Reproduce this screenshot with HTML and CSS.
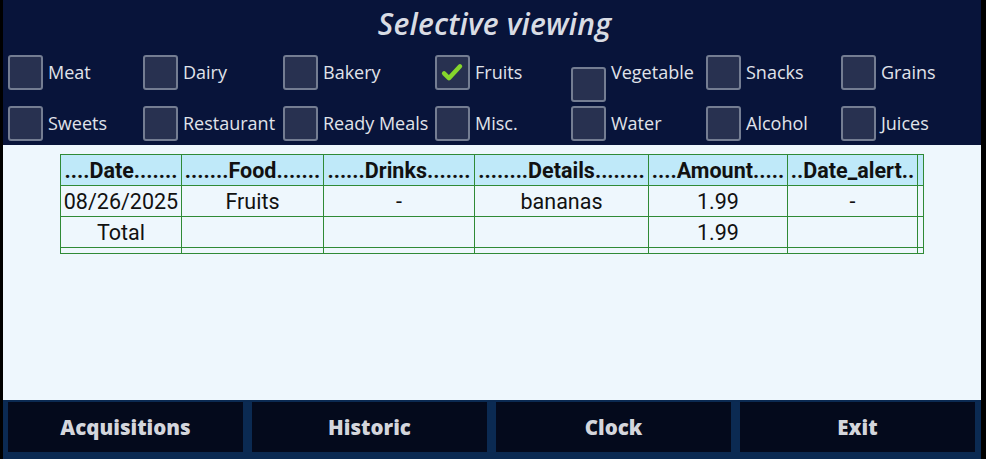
FILE: index.html
```html
<!DOCTYPE html>
<html>
<head>
<meta charset="utf-8">
<link rel="stylesheet" href="styles.css">
</head>
<body>
<div class="app">
  <header class="top">
    <h1 class="title">Selective viewing</h1>
    <div class="filters">
      <label class="opt"><span class="box"></span><span class="lbl">Meat</span></label>
      <label class="opt"><span class="box"></span><span class="lbl">Dairy</span></label>
      <label class="opt"><span class="box"></span><span class="lbl">Bakery</span></label>
      <label class="opt"><span class="box checked"><svg viewBox="0 0 35 35" width="31" height="31"><path d="M8 18.5 L13.5 24 L26 10.5" fill="none" stroke="#86d62c" stroke-width="5" stroke-linecap="round" stroke-linejoin="round"/></svg></span><span class="lbl">Fruits</span></label>
      <label class="opt"><span class="box low"></span><span class="lbl">Vegetable</span></label>
      <label class="opt"><span class="box"></span><span class="lbl">Snacks</span></label>
      <label class="opt"><span class="box"></span><span class="lbl">Grains</span></label>
      <label class="opt"><span class="box"></span><span class="lbl">Sweets</span></label>
      <label class="opt"><span class="box"></span><span class="lbl">Restaurant</span></label>
      <label class="opt"><span class="box"></span><span class="lbl">Ready Meals</span></label>
      <label class="opt"><span class="box"></span><span class="lbl">Misc.</span></label>
      <label class="opt"><span class="box"></span><span class="lbl">Water</span></label>
      <label class="opt"><span class="box"></span><span class="lbl">Alcohol</span></label>
      <label class="opt"><span class="box"></span><span class="lbl">Juices</span></label>
    </div>
  </header>
  <main class="content">
    <table class="grid">
      <colgroup>
        <col class="c1"><col class="c2"><col class="c3"><col class="c4"><col class="c5"><col class="c6"><col class="c7">
      </colgroup>
      <thead>
        <tr>
          <th>....Date.......</th>
          <th>.......Food.......</th>
          <th>......Drinks.......</th>
          <th>........Details........</th>
          <th>....Amount.....</th>
          <th>..Date_alert..</th>
          <th></th>
        </tr>
      </thead>
      <tbody>
        <tr>
          <td>08/26/2025</td>
          <td>Fruits</td>
          <td>-</td>
          <td>bananas</td>
          <td>1.99</td>
          <td>-</td>
          <td></td>
        </tr>
        <tr>
          <td>Total</td>
          <td></td>
          <td></td>
          <td></td>
          <td>1.99</td>
          <td></td>
          <td></td>
        </tr>
        <tr class="thin">
          <td></td><td></td><td></td><td></td><td></td><td></td><td></td>
        </tr>
      </tbody>
    </table>
  </main>
  <nav class="bottom">
    <button class="btn">Acquisitions</button>
    <button class="btn">Historic</button>
    <button class="btn">Clock</button>
    <button class="btn">Exit</button>
  </nav>
</div>
</body>
</html>
```
FILE: styles.css
```css
html, body {
  margin: 0;
  padding: 0;
  background: #000;
  height: 459px;
  overflow: hidden;
}
.app {
  margin-left: 3px;
  width: 978px;
  height: 459px;
  display: flex;
  flex-direction: column;
  font-family: "Open Sans", "DejaVu Sans", sans-serif;
}
.top {
  height: 145px;
  background: #08143a;
  box-sizing: border-box;
  padding-left: 5px;
}
.title {
  margin: 0;
  height: 52px;
  line-height: 48px;
  text-align: center;
  font-size: 30px;
  font-weight: 600;
  font-style: italic;
  color: #d9dce4;
  letter-spacing: 0.2px;
}
.filters {
  display: grid;
  grid-template-columns: 135px 140px 152px 136px 135px 135px 1fr;
  grid-template-rows: 51px 42px;
}
.opt {
  display: flex;
  align-items: flex-start;
  color: #e0e3ea;
  font-size: 18px;
}
.box {
  flex: none;
  width: 35px;
  height: 35px;
  margin-top: 3px;
  box-sizing: border-box;
  border: 2px solid #747d92;
  border-radius: 3px;
  background: #283150;
  display: flex;
  align-items: center;
  justify-content: center;
}
.box.low {
  margin-top: 15px;
}
.lbl {
  margin-left: 5px;
  margin-top: 3px;
  line-height: 35px;
  white-space: nowrap;
}
.content {
  height: 255px;
  background: #eef7fd;
  box-sizing: border-box;
  padding: 9px 0 0 57px;
}
.grid {
  border-collapse: collapse;
  table-layout: fixed;
  width: 863px;
  font-family: Roboto, "Liberation Sans", sans-serif;
  color: #111;
}
.c1 { width: 121px; }
.c2 { width: 142px; }
.c3 { width: 151px; }
.c4 { width: 174px; }
.c5 { width: 139px; }
.c6 { width: 130px; }
.c7 { width: 6px; }
.grid th, .grid td {
  border: 1px solid #2f8a36;
  padding: 0;
  height: 30px;
  text-align: center;
  white-space: nowrap;
  overflow: hidden;
}
.grid th {
  background: #bfe9f9;
  font-size: 21.5px;
  font-weight: 700;
  color: #111;
}
.grid td {
  font-size: 21.5px;
}
.grid tr.thin td {
  height: 5px;
}
.bottom {
  flex: 1;
  background: #0b2a52;
  display: grid;
  grid-template-columns: repeat(4, 1fr);
  column-gap: 9px;
  padding: 2px 6px 7px 5px;
}
.btn {
  border: none;
  background: #040a1c;
  color: #d4d6dc;
  font-family: "Open Sans", "DejaVu Sans", sans-serif;
  font-weight: 800;
  font-size: 20.5px;
  padding: 0;
}
```
